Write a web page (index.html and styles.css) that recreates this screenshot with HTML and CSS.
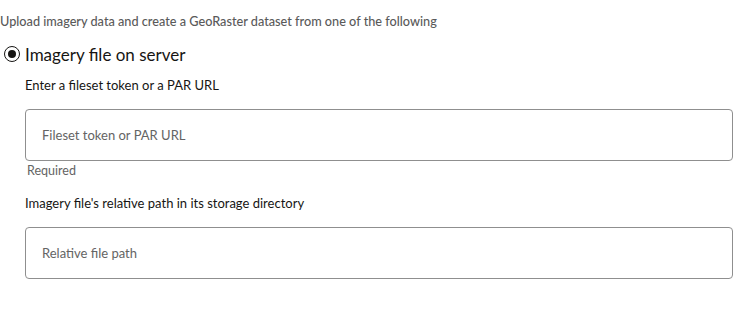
FILE: index.html
```html
<!DOCTYPE html>
<html>
<head>
<meta charset="utf-8">
<link rel="stylesheet" href="styles.css">
</head>
<body>
<div class="page">
  <p class="intro">Upload imagery data and create a GeoRaster dataset from one of the following</p>
  <label class="radio-row">
    <span class="radio"><span class="dot"></span></span>
    <span class="radio-label">Imagery file on server</span>
  </label>
  <div class="fields">
    <div class="field">
      <div class="field-label">Enter a fileset token or a PAR URL</div>
      <div class="input"><span class="placeholder">Fileset token or PAR URL</span></div>
      <div class="help">Required</div>
    </div>
    <div class="field second">
      <div class="field-label">Imagery file's relative path in its storage directory</div>
      <div class="input"><span class="placeholder">Relative file path</span></div>
    </div>
  </div>
</div>
</body>
</html>
```
FILE: styles.css
```css
html, body { margin: 0; padding: 0; background: #fff; }
body { font-family: Lato, "Noto Sans", sans-serif; color: #161513; }
.page { width: 754px; height: 325px; }
.intro {
  margin: 0;
  padding-top: 13px;
  font-size: 12.7px;
  line-height: 16px;
  color: #5a5a5a;
  font-weight: 500;
}
.radio-row {
  display: flex;
  align-items: center;
  margin-top: 13px;
  height: 24px;
}
.radio {
  box-sizing: border-box;
  width: 16px; height: 16px;
  margin-left: 4px;
  border: 1.5px solid #161513;
  border-radius: 50%;
  display: flex; align-items: center; justify-content: center;
}
.dot { width: 8px; height: 8px; border-radius: 50%; background: #161513; }
.radio-label { margin-left: 5px; font-size: 17px; color: #161513; }
.fields { padding-left: 25px; padding-right: 21px; }
.field-label { font-size: 13px; line-height: 16px; color: #161513; margin-top: 11px; }
.input {
  box-sizing: border-box;
  height: 52px;
  margin-top: 16px;
  border: 1px solid #8f8f8f;
  border-radius: 4px;
  display: flex; align-items: center;
  padding-left: 16px;
}
.placeholder { font-size: 13px; color: #646464; }
.help { font-size: 12.5px; color: #646464; margin-left: 2px; margin-top: 2px; line-height: 15px; }
.second .field-label { margin-top: 17px; }
```
